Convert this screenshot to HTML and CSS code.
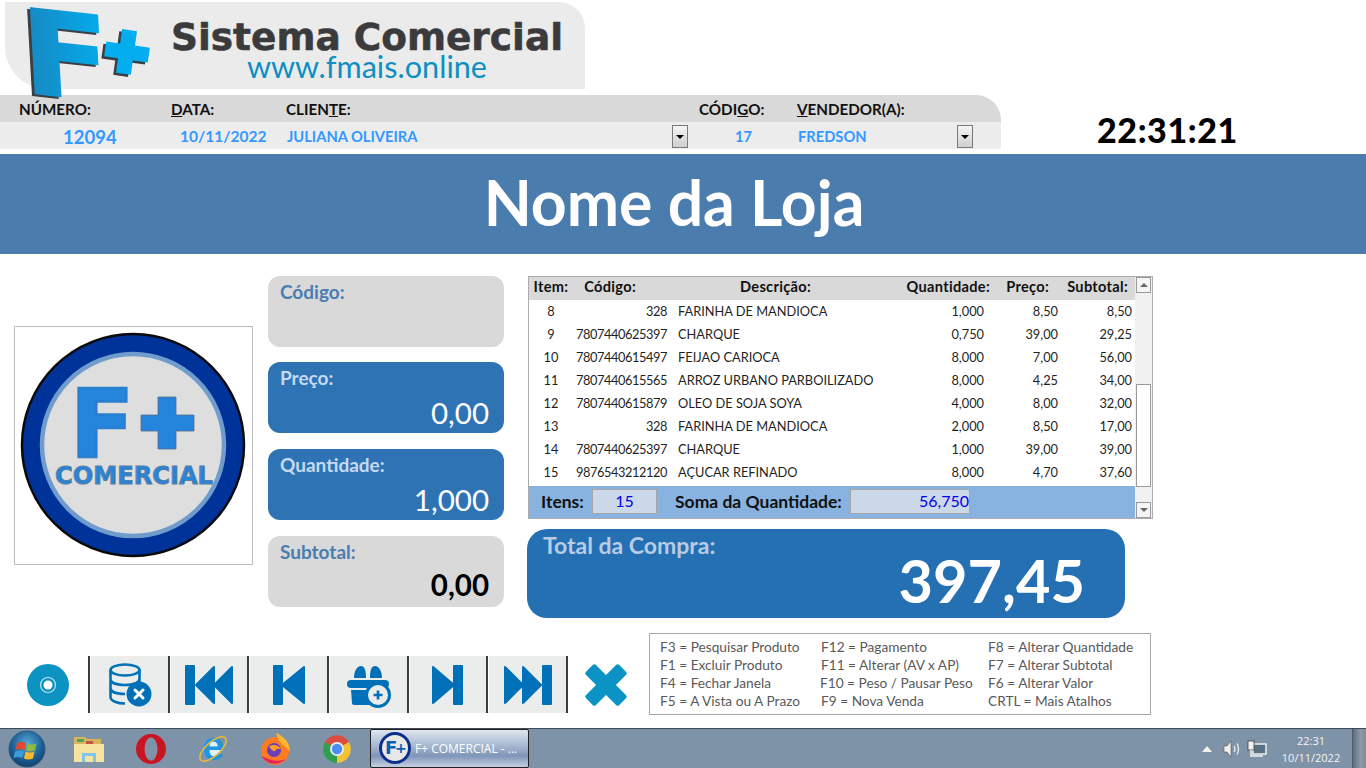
FILE: index.html
```html
<!DOCTYPE html>
<html lang="pt-BR">
<head>
<meta charset="utf-8">
<title>F+ Comercial</title>
<link rel="stylesheet" href="styles.css">
</head>
<body>
<div class="screen">
  <div class="top">
    <div class="banner">
      <svg class="banner-text" width="580" height="87" viewBox="0 0 580 87">
        <text x="166" y="48" class="brand-title" textLength="392" lengthAdjust="spacingAndGlyphs">Sistema Comercial</text>
        <text x="242" y="76" class="brand-url" textLength="240" lengthAdjust="spacingAndGlyphs">www.fmais.online</text>
      </svg>
      <svg class="brand-mark" width="160" height="100" viewBox="0 0 160 100">
        <defs>
          <linearGradient id="fgrad" x1="0" x2="1" y1="0" y2="0">
            <stop offset="0" stop-color="#1a86bd"/><stop offset="0.5" stop-color="#0d9ad8"/><stop offset="1" stop-color="#04aeee"/>
          </linearGradient>
        </defs>
        <g transform="translate(19 90) matrix(1.2 0.13 0.06 1.08 0 0)">
          <text x="-2.500" y="2" class="mark-f mark-shadow">F</text>
          <text x="0" y="0" class="mark-f mark-fill">F</text>
        </g>
        <g transform="rotate(8 122 50)">
          <path d="M114 28h15v14.500h15v15h-15V72h-15V57.500H100v-15h14z" fill="#3a3f44" transform="translate(-2.500 2.500)"/>
          <path d="M114 28h15v14.500h15v15h-15V72h-15V57.500H100v-15h14z" fill="#04aeee"/>
        </g>
      </svg>
    </div>
    <div class="head-wrap">
      <div class="sale-head">
        <div class="labels">
          <span>NÚMERO:</span>
          <span><u>D</u>ATA:</span>
          <span>CLIEN<u>T</u>E:</span>
          <span>CÓDI<u>G</u>O:</span>
          <span><u>V</u>ENDEDOR(A):</span>
        </div>
        <div class="values">
          <span class="num">12094</span>
          <span class="date">10/11/2022</span>
          <span>JULIANA OLIVEIRA</span>
          <button class="combo" type="button"><i></i></button>
          <span class="code">17</span>
          <span>FREDSON</span>
          <button class="combo" type="button"><i></i></button>
        </div>
      </div>
      <div class="clock">22:31:21</div>
    </div>
  </div>

  <div class="store">Nome da Loja</div>

  <div class="work">
    <div class="photo">
      <svg width="237" height="237" viewBox="0 0 237 237">
        <circle cx="118" cy="118" r="111" fill="#003399" stroke="#0a0a0a" stroke-width="2.500"/>
        <circle cx="118" cy="118" r="91" fill="#dedede" stroke="#6f9ccc" stroke-width="4.500"/>
        <text x="55" y="130" class="round-f">F</text>
        <path d="M143 70h18v18h18v16h-18v18h-18v-18h-17V88h17z" fill="#2584dc" stroke="#55708f" stroke-width="0.800"/>
        <text x="40" y="157" class="round-c" textLength="158" lengthAdjust="spacingAndGlyphs">COMERCIAL</text>
      </svg>
    </div>
    <div class="cards">
      <div class="card light"><div class="card-label">Código:</div></div>
      <div class="card blue"><div class="card-label">Preço:</div><div class="card-value">0,00</div></div>
      <div class="card blue"><div class="card-label">Quantidade:</div><div class="card-value">1,000</div></div>
      <div class="card light"><div class="card-label">Subtotal:</div><div class="card-value strong">0,00</div></div>
    </div>
    <div class="sale">
      <div class="grid-box">
        <div class="grid-main">
          <div class="row th">
            <span class="c-item">Item:</span>
            <span class="c-code">Código:</span>
            <span class="c-desc">Descrição:</span>
            <span class="c-qty">Quantidade:</span>
            <span class="c-price">Preço:</span>
            <span class="c-sub">Subtotal:</span>
          </div>
          <div class="rows">
            <div class="row"><span>8</span><span>328</span><span>FARINHA DE MANDIOCA</span><span>1,000</span><span>8,50</span><span>8,50</span></div>
            <div class="row"><span>9</span><span>7807440625397</span><span>CHARQUE</span><span>0,750</span><span>39,00</span><span>29,25</span></div>
            <div class="row"><span>10</span><span>7807440615497</span><span>FEIJAO CARIOCA</span><span>8,000</span><span>7,00</span><span>56,00</span></div>
            <div class="row"><span>11</span><span>7807440615565</span><span>ARROZ URBANO PARBOILIZADO</span><span>8,000</span><span>4,25</span><span>34,00</span></div>
            <div class="row"><span>12</span><span>7807440615879</span><span>OLEO DE SOJA SOYA</span><span>4,000</span><span>8,00</span><span>32,00</span></div>
            <div class="row"><span>13</span><span>328</span><span>FARINHA DE MANDIOCA</span><span>2,000</span><span>8,50</span><span>17,00</span></div>
            <div class="row"><span>14</span><span>7807440625397</span><span>CHARQUE</span><span>1,000</span><span>39,00</span><span>39,00</span></div>
            <div class="row"><span>15</span><span>9876543212120</span><span>AÇUCAR REFINADO</span><span>8,000</span><span>4,70</span><span>37,60</span></div>
          </div>
          <div class="sum">
            <span class="sum-label first">Itens:</span>
            <span class="sum-box items">15</span>
            <span class="sum-label second">Soma da Quantidade:</span>
            <span class="sum-box qty">56,750</span>
          </div>
        </div>
        <div class="scroll">
          <span class="sb-btn"><i class="up"></i></span>
          <span class="sb-track"><span class="sb-thumb"></span></span>
          <span class="sb-btn"><i class="down"></i></span>
        </div>
      </div>
      <div class="total">
        <div class="total-label">Total da Compra:</div>
        <div class="total-value">397,45</div>
      </div>
    </div>
  </div>

  <div class="bottom">
    <div class="tools">
      <div class="tool first">
        <svg width="56" height="48" viewBox="0 0 56 48"><circle cx="27" cy="24" r="21" fill="#0d93c2"/><circle cx="27" cy="24" r="7.500" fill="none" stroke="#bfe3f0" stroke-width="1.200"/><circle cx="27" cy="24" r="4.500" fill="#fff"/></svg>
      </div>
      <div class="tool gray">
        <svg width="56" height="48" viewBox="0 0 56 48">
          <g fill="none" stroke="#0070b8" stroke-width="2.600">
            <ellipse cx="24" cy="9" rx="14.500" ry="5.500"/>
            <path d="M9.500 9v27c0 4 7 6.500 14.500 6.500M38.500 9v16M9.500 18c0 4 6.500 6 14.500 6s14.500-2 14.500-6M9.500 27c0 4 6.500 6 14.500 6"/>
          </g>
          <circle cx="38" cy="33" r="12.500" fill="#0070b8"/>
          <path d="M34 29l8 8M42 29l-8 8" stroke="#fff" stroke-width="3" stroke-linecap="round"/>
        </svg>
      </div>
      <div class="tool gray">
        <svg width="56" height="48" viewBox="0 0 56 48"><g fill="#0070b8" stroke="#0070b8" stroke-width="2" stroke-linejoin="round"><path d="M5 5h8v38H5z"/><path d="M15 24L33 6v36z"/><path d="M33 24L51 6v36z"/></g></svg>
      </div>
      <div class="tool gray">
        <svg width="56" height="48" viewBox="0 0 56 48"><g fill="#0070b8" stroke="#0070b8" stroke-width="2" stroke-linejoin="round"><path d="M13 5h8v38h-8z"/><path d="M21 24L43 6v36z"/></g></svg>
      </div>
      <div class="tool gray">
        <svg width="56" height="48" viewBox="0 0 56 48">
          <g fill="#0070b8">
            <path d="M14 17c0-7 3-12 7-12s5 5 5 12zM30 17c0-7 1-12 5-12s7 5 7 12z"/>
            <rect x="7" y="19" width="42" height="8" rx="4"/>
            <path d="M11 29h30l-2 15H14c-1 0-2-1-2-2z"/>
          </g>
          <circle cx="38" cy="34" r="11.500" fill="#ebeded" stroke="#0070b8" stroke-width="3"/>
          <path d="M38 29.500v9M33.500 34h9" stroke="#0070b8" stroke-width="2.600"/>
        </svg>
      </div>
      <div class="tool gray">
        <svg width="56" height="48" viewBox="0 0 56 48"><g fill="#0070b8" stroke="#0070b8" stroke-width="2" stroke-linejoin="round"><path d="M34 5h8v38h-8z"/><path d="M34 24L13 6v36z"/></g></svg>
      </div>
      <div class="tool gray">
        <svg width="56" height="48" viewBox="0 0 56 48"><g fill="#0070b8" stroke="#0070b8" stroke-width="2" stroke-linejoin="round"><path d="M43 5h8v38h-8z"/><path d="M41 24L23 6v36z"/><path d="M23 24L5 6v36z"/></g></svg>
      </div>
      <div class="tool close">
        <svg width="56" height="48" viewBox="0 0 56 48"><g fill="#0a93c4" transform="rotate(45 27 24)"><rect x="3.500" y="17" width="47" height="14" rx="2"/><rect x="20" y="0.500" width="14" height="47" rx="2"/></g></svg>
      </div>
    </div>
    <div class="keys">
      <div class="key-col a"><span>F3 = Pesquisar Produto</span><span>F1 = Excluir Produto</span><span>F4 = Fechar Janela</span><span>F5 = A Vista ou A Prazo</span></div>
      <div class="key-col b"><span>F12 = Pagamento</span><span>F11 = Alterar (AV x AP)</span><span class="pull">F10 = Peso / Pausar Peso</span><span>F9 = Nova Venda</span></div>
      <div class="key-col c"><span>F8 = Alterar Quantidade</span><span>F7 = Alterar Subtotal</span><span>F6 = Alterar Valor</span><span>CRTL = Mais Atalhos</span></div>
    </div>
  </div>

  <div class="taskbar">
    <div class="orb-cell">
      <svg width="38" height="38" viewBox="0 0 38 38">
        <defs><radialGradient id="orb" cx="0.500" cy="0.350" r="0.700"><stop offset="0" stop-color="#5aa9d8"/><stop offset="0.600" stop-color="#1c5f96"/><stop offset="1" stop-color="#0c3a63"/></radialGradient></defs>
        <circle cx="19" cy="19" r="18" fill="url(#orb)" stroke="#2c5a80"/>
        <path d="M9 13q4-2 9 0l-1.500 7q-4-2-9 0z" fill="#e2492f"/>
        <path d="M19.500 13.500q4 2 9 0L27 20.500q-5 2-9 0z" fill="#8dbb3d"/>
        <path d="M7 21.500q5-2 9 0L14.500 28q-4-2-9 0z" fill="#3d9bdc"/>
        <path d="M17.500 21.500q4 2 9 0L25 28.500q-5 2-9 0z" fill="#f5b82e"/>
      </svg>
    </div>
    <div class="app">
      <svg width="32" height="30" viewBox="0 0 32 30">
        <path d="M1 3h11l2 2h14v22H1z" fill="#d9b65a"/>
        <rect x="4" y="5" width="7" height="3" fill="#4aa564"/><rect x="13" y="7" width="7" height="3" fill="#c8534a"/>
        <path d="M1 10h30v18H1z" fill="#f6e3a0"/>
        <path d="M9 28v-9h14v9h-3v-6h-8v6z" fill="#7fc4ea"/>
      </svg>
    </div>
    <div class="app">
      <svg width="32" height="32" viewBox="0 0 32 32"><circle cx="16" cy="16" r="15" fill="#c91522"/><ellipse cx="16" cy="16" rx="6.500" ry="11.500" fill="#7e92a8"/></svg>
    </div>
    <div class="app">
      <svg class="ie-icon" width="34" height="34" viewBox="0 0 34 34">
        <circle cx="17" cy="17" r="8" fill="#dff2fc"/>
        <text x="17" y="28" class="ie-e">e</text>
        <ellipse cx="17" cy="17" rx="16.500" ry="7" transform="rotate(-42 17 17)" fill="none" stroke="#e8b93a" stroke-width="1.600"/>
      </svg>
    </div>
    <div class="app">
      <svg width="34" height="34" viewBox="0 0 34 34">
        <circle cx="17" cy="19" r="14" fill="#ff7b22"/>
        <path d="M18 1c8 3 14 10 14 18 0 2-2-3-6-5-3-2-6-6-8-13z" fill="#ffb52e"/>
        <path d="M4 24c3 8 16 11 24 3-6 3-16 2-24-3z" fill="#e3245c"/>
        <circle cx="16" cy="18" r="7" fill="#6a3fb6"/><path d="M11 14q8-3 12 3-5-1-6 2-3 1-6-5z" fill="#ff9c2b"/>
      </svg>
    </div>
    <div class="app">
      <svg width="30" height="30" viewBox="0 0 30 30">
        <path d="M15 15L3 8A14 14 0 0 1 27 8z" fill="#dc4d3f"/>
        <path d="M15 15l12-7A14 14 0 0 1 15 29z" fill="#f5c332"/>
        <path d="M15 15v14A14 14 0 0 1 3 8z" fill="#2f9e4f"/>
        <circle cx="15" cy="15" r="7" fill="#e8eef5"/><circle cx="15" cy="15" r="5.200" fill="#4c8bf0"/>
      </svg>
    </div>
    <div class="task-btn">
      <svg width="32" height="32" viewBox="0 0 32 32">
        <circle cx="16" cy="16" r="14.500" fill="#e8e8e8" stroke="#0b2f8a" stroke-width="3"/>
        <text x="6" y="22" class="tb-f">F</text><text x="16" y="21" class="tb-p">+</text>
      </svg>
      <span>F+ COMERCIAL - ...</span>
    </div>
    <div class="tray">
      <svg width="10" height="6" viewBox="0 0 10 6"><path d="M5 0l5 6H0z" fill="#f2f2f2"/></svg>
      <svg class="speaker" width="18" height="18" viewBox="0 0 18 18"><path d="M1 6h3l4-5v16l-4-5H1z" fill="#eee" stroke="#555" stroke-width="0.600"/><path d="M11 6q2 3 0 6M14 3.500q3 5.500 0 11" fill="none" stroke="#eee" stroke-width="1.300"/></svg>
      <svg class="network" width="20" height="18" viewBox="0 0 20 18"><rect x="6" y="4" width="13" height="10" fill="#5d7186" stroke="#f0f0f0" stroke-width="1.500"/><rect x="1" y="1" width="6" height="9" fill="#f0f0f0" stroke="#333" stroke-width="0.700"/><path d="M4 10v6h12" stroke="#f0f0f0" stroke-width="1.500" fill="none"/></svg>
      <div class="tray-time"><span>22:31</span><span>10/11/2022</span></div>
      <div class="show-desktop"></div>
    </div>
  </div>
</div>
</body>
</html>
```

FILE: styles.css
```css
* { box-sizing: border-box; }
html, body { margin: 0; padding: 0; background: #fff; }
body { font-family: Lato, "Open Sans", sans-serif; overflow: hidden; }
.screen { width: 1366px; height: 768px; display: flex; flex-direction: column; overflow: hidden; }

/* top */
.top { height: 154px; padding-top: 2px; position: relative; }
.banner { margin-left: 5px; width: 580px; height: 87px; background: #ebebeb; border-radius: 0 26px 0 42px; position: relative; }
.banner-text { display: block; }
.brand-title { font-family: "DejaVu Sans", sans-serif; font-weight: 700; font-size: 38px; fill: #3b3b3d; stroke: #3b3b3d; stroke-width: 0.600px; }
.brand-url { font-family: Lato, sans-serif; font-size: 30px; fill: #0e8fc2; }
.brand-mark { position: absolute; left: 0; top: 0; z-index: 2; overflow: visible; }
.mark-f { font-family: "DejaVu Sans", sans-serif; font-weight: 700; font-size: 108px; stroke-width: 2px; }
.mark-shadow { fill: #3a3f44; stroke: #3a3f44; }
.mark-fill { fill: url(#fgrad); stroke: url(#fgrad); }

.head-wrap { display: flex; margin-top: 6px; }
.sale-head { width: 1001px; }
.labels { height: 27px; background: #d9d9d9; border-radius: 0 25px 0 0; display: grid; grid-template-columns: 152px 115px 413px 98px 1fr; padding-left: 19px; align-items: center; font-weight: 700; font-size: 15.200px; color: #111; }
.values { height: 27px; background: #ececec; display: grid; grid-template-columns: 117px 107px 385px 16px 110px 159px 16px; padding-left: 63px; align-items: center; font-weight: 700; font-size: 14.700px; color: #3399ff; }
.num { font-size: 18.500px; padding-top: 2px; }
.date { font-size: 15.500px; }
.code { padding-left: 47px; white-space: nowrap; }
.combo { width: 16px; height: 23px; padding: 0; border: 1px solid #7a7a7a; background: linear-gradient(#f5f5f5, #cfcfcf); display: flex; align-items: center; justify-content: center; margin-top: 2px; }
.combo i { width: 0; height: 0; border: 4px solid transparent; border-top: 4px solid #000; border-bottom: 0; }
.clock { margin-left: 96px; margin-top: 14px; font-weight: 900; font-size: 34px; line-height: 42px; color: #000; letter-spacing: 0.600px; }

.store { height: 100px; background: #4a7cae; color: #fff; font-weight: 700; font-size: 62.500px; line-height: 96px; text-align: center; padding-right: 18px; }

/* work area */
.work { display: flex; height: 373px; padding: 22px 0 0 14px; }
.photo { width: 239px; height: 239px; border: 1px solid #bdbdbd; margin-top: 50px; }
.photo svg { display: block; }
.round-f { font-family: "DejaVu Sans", sans-serif; font-weight: 700; font-size: 94px; fill: #2584dc; stroke: #2a7fcf; stroke-width: 2.500px; }
.round-c { font-family: "DejaVu Sans", sans-serif; font-weight: 700; font-size: 24.500px; fill: #2584dc; stroke: #5d7f9f; stroke-width: 1px; }

.cards { width: 236px; margin-left: 15px; display: flex; flex-direction: column; gap: 15px; }
.card { height: 71px; border-radius: 12px; padding: 5px 15px 0 12px; position: relative; }
.card + .card + .card { margin-top: 1px; }
.card.light { background: #d9d9d9; color: #4a7db1; }
.card.blue { background: #2e74b5; color: #c5d9f1; }
.card-label { font-weight: 700; font-size: 19px; line-height: 22px; }
.card-value { text-align: right; font-size: 29.500px; line-height: 36px; margin-top: 6px; color: #fff; }
.card-value.strong { color: #000; font-weight: 700; margin-top: 4px; }

.sale { width: 626px; margin-left: 23px; }
.grid-box { margin-left: 1px; width: 625px; height: 243px; border: 1px solid #acacac; display: flex; }
.grid-main { width: 606px; display: flex; flex-direction: column; }
.row { display: grid; grid-template-columns: 44px 94px 11px 235px 71px 74px 74px; height: 23px; align-items: center; font-size: 12.800px; color: #1f1f1f; white-space: nowrap; }
.row > span:nth-child(1) { text-align: center; }
.row > span:nth-child(2) { text-align: right; letter-spacing: -0.420px; }
.row > span:nth-child(3) { grid-column: 4; }
.row > span:nth-child(4), .row > span:nth-child(5), .row > span:nth-child(6) { text-align: right; }
.row.th { height: 23px; background: #d9d9d9; font-weight: 700; color: #111; font-size: 14.600px; letter-spacing: 0.300px; padding-bottom: 4px; }
.row.th > span:nth-child(2) { letter-spacing: 0.300px; padding-right: 31px; }
.row.th .c-desc { padding-left: 62px; }
.row.th .c-qty { justify-self: end; margin-right: -6px; }
.row.th .c-price { padding-right: 9px; }
.row.th .c-sub { padding-right: 4px; }
.rows { height: 186px; margin-top: -1px; flex: none; }
.sum { flex: 1; margin-top: 1px; background: #88b3e0; display: flex; align-items: center; font-weight: 700; font-size: 17.500px; color: #111; padding-bottom: 1px; }
.sum-label.first { margin-left: 12px; width: 51px; }
.sum-label.second { margin-left: 18px; width: 175px; white-space: nowrap; }
.sum-box { height: 25px; background: #ccd8e8; border: 1px solid #a6a6a6; color: #0000e6; font-weight: 400; font-size: 16px; line-height: 22px; }
.sum-box.items { width: 65px; text-align: center; }
.sum-box.qty { width: 120px; text-align: right; }
.scroll { flex: 1; display: flex; flex-direction: column; background: #f1f1f1; padding: 0 1px 0 1px; }
.sb-btn { height: 16px; border: 1px solid #9a9a9a; background: #f4f4f4; display: flex; align-items: center; justify-content: center; flex: none; }
.sb-btn i { width: 0; height: 0; border: 4px solid transparent; }
.sb-btn i.up { border-bottom: 4px solid #666; border-top: 0; }
.sb-btn i.down { border-top: 4px solid #666; border-bottom: 0; }
.sb-track { flex: 1; padding-top: 91px; padding-bottom: 15px; display: flex; }
.sb-thumb { flex: 1; background: #fff; border: 1px solid #9a9a9a; }

.total { margin-top: 10px; width: 598px; height: 89px; background: #2470b3; border-radius: 20px; padding: 3px 40px 0 16px; }
.total-label { color: #b8cce4; font-weight: 700; font-size: 23px; line-height: 26px; }
.total-value { color: #fff; font-weight: 700; text-align: right; font-size: 59.500px; line-height: 62px; margin-top: -9px; }

/* bottom */
.bottom { height: 101px; display: flex; }
.tools { display: flex; width: 649px; padding: 29px 0 0 10px; height: 86px; }
.tool { height: 57px; width: 79.670px; border-left: 2px solid #3c3c3c; padding-left: 1px; display: flex; flex: none; }
.tool svg { margin: auto; display: block; }
.tool.first { width: 78px; border-left: 0; padding: 0; }
.tool.close { padding-left: 0; }
.tool.gray { background: #ebeded content-box; }
.keys { margin-top: 6px; width: 502px; height: 82px; border: 1px solid #a8a8a8; display: grid; grid-template-columns: 161px 167px 1fr; padding: 4px 0 0 10px; color: #595959; font-size: 13.700px; line-height: 18px; white-space: nowrap; }
.key-col { display: flex; flex-direction: column; }
.key-col .pull { margin-left: -1px; }

/* taskbar */
.taskbar { flex: 1; height: 40px; background: #7e92a8; border-top: 1px solid #3f4a57; display: flex; align-items: center; overflow: hidden; }
.orb-cell { width: 58px; padding: 0 4px 0 8px; display: flex; }
.app { width: 62px; display: flex; justify-content: center; }
.ie-icon { overflow: visible; }
.ie-e { font-family: "Liberation Sans", sans-serif; font-weight: 700; font-size: 40px; text-anchor: middle; fill: #1e96e2; }
.task-btn { margin-left: 2px; width: 159px; height: 39px; border: 1px solid #222; border-radius: 2px; background: linear-gradient(#dfe6ef, #a3b5cf 45%, #8095b8 70%, #c4cfdf); display: flex; align-items: center; padding-left: 8px; gap: 4px; color: #fff; font-family: "Open Sans", sans-serif; font-size: 12px; padding-bottom: 1px; white-space: nowrap; }
.tb-f { font-family: "DejaVu Sans", sans-serif; font-weight: 700; font-size: 18px; fill: #0b5fb0; }
.tb-p { font-family: "DejaVu Sans", sans-serif; font-weight: 700; font-size: 14px; fill: #0b5fb0; }
.tray { margin-left: auto; display: flex; align-items: center; height: 100%; color: #f4f4f4; font-family: "Open Sans", sans-serif; font-size: 11px; }
.speaker { margin-left: 11px; }
.network { margin-left: 6px; }
.tray-time { width: 82px; display: flex; flex-direction: column; align-items: center; line-height: 17px; margin-left: 3px; }
.show-desktop { width: 14px; height: 100%; background: linear-gradient(90deg, #5f6f80, #8d9aa8 60%, #7e8b99); border-left: 1px solid #4f5b68; }
```
